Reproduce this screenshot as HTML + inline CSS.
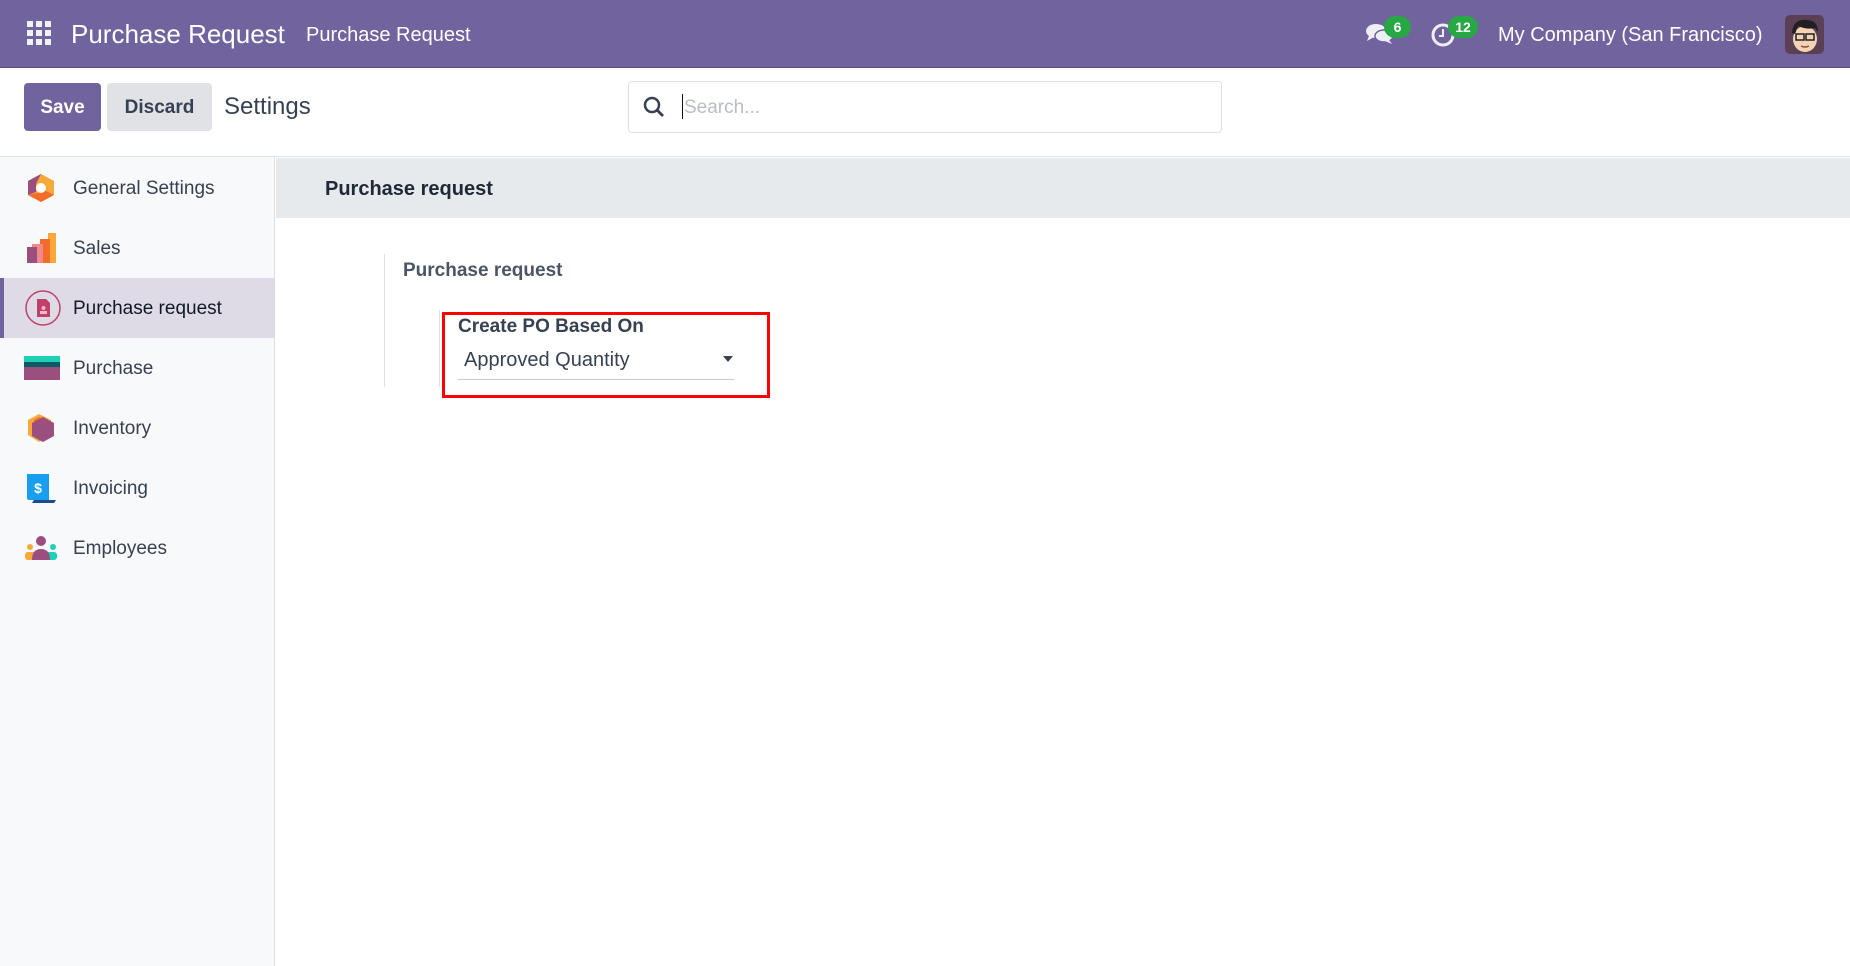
<!DOCTYPE html>
<html><head><meta charset="utf-8"><style>
*{box-sizing:border-box;margin:0;padding:0}
body{width:1850px;height:966px;overflow:hidden;background:#fff;font-family:"Liberation Sans","DejaVu Sans",sans-serif;color:#374151;position:relative}
.abs{position:absolute}
.nav{left:0;top:0;width:1850px;height:68px;background:#71639e;border-bottom:1px solid #5d5185}
.navt{color:#fff;white-space:nowrap}
.cp{left:0;top:68px;width:1850px;height:89px;background:#fff;border-bottom:1px solid #dee2e6}
.side{left:0;top:157px;width:275px;height:809px;background:#f8f9fa;border-right:1px solid #dee2e6}
.item{position:absolute;left:0;width:275px;height:60px;font-size:19px;color:#374151}
.item span{position:absolute;left:73px;top:20px}
.item .ic{position:absolute;left:24px;top:15px;width:34px;height:30px}
.badge{background:#28a745;color:#fff;font-size:14px;font-weight:bold;border-radius:12px;text-align:center;line-height:22px;height:22px}
</style></head><body>
<div class="abs nav"></div>
<svg class="abs" style="left:27px;top:21px" width="24" height="24" viewBox="0 0 24 24" fill="#f1f1f5"><rect x="0" y="0" width="6" height="6"/><rect x="9" y="0" width="6" height="6"/><rect x="18" y="0" width="6" height="6"/><rect x="0" y="9" width="6" height="6"/><rect x="9" y="9" width="6" height="6"/><rect x="18" y="9" width="6" height="6"/><rect x="0" y="18" width="6" height="6"/><rect x="9" y="18" width="6" height="6"/><rect x="18" y="18" width="6" height="6"/></svg>
<div class="abs navt" style="left:71px;top:19px;font-size:26px">Purchase Request</div>
<div class="abs navt" style="left:306px;top:24px;font-size:20px">Purchase Request</div>
<svg class="abs" style="left:1365px;top:22px" width="30" height="24" viewBox="0 0 30 24"><ellipse cx="11" cy="9" rx="10" ry="7" fill="#eeeef5"/><path d="M4 14 L2 19 L9 15Z" fill="#eeeef5"/><ellipse cx="19" cy="14" rx="9" ry="6" fill="#eeeef5" stroke="#71639e" stroke-width="1.5"/><path d="M24 18 L27 22 L20 19Z" fill="#eeeef5"/></svg>
<div class="abs badge" style="left:1384px;top:16px;width:27px">6</div>
<svg class="abs" style="left:1430px;top:22px" width="26" height="26" viewBox="0 0 26 26"><circle cx="13" cy="13" r="10" fill="none" stroke="#eeeef5" stroke-width="3"/><path d="M13 7v7h-4" stroke="#eeeef5" stroke-width="2" fill="none"/></svg>
<div class="abs badge" style="left:1448px;top:16px;width:30px">12</div>
<div class="abs navt" style="left:1498px;top:24px;font-size:20px">My Company (San Francisco)</div>
<div class="abs" style="left:1785px;top:15px;width:39px;height:39px;border-radius:5px;background:#5a3f55;overflow:hidden">
<svg width="39" height="39" viewBox="0 0 39 39"><ellipse cx="20" cy="24" rx="12" ry="13" fill="#f4d3b5"/><path d="M7 18 Q8 4 21 5 Q33 5 33 17 L30 13 Q22 15 13 11 L10 19Z" fill="#1f1f24"/><rect x="11" y="19" width="8" height="6" fill="none" stroke="#222" stroke-width="1.5"/><rect x="21" y="19" width="8" height="6" fill="none" stroke="#222" stroke-width="1.5"/><path d="M16 31 Q20 33 24 31" stroke="#8a5040" stroke-width="1.5" fill="none"/></svg></div>

<div class="abs cp"></div>
<div class="abs" style="left:24px;top:83px;width:77px;height:48px;background:#71639e;border-radius:4px;color:#fff;font-weight:bold;font-size:19px;text-align:center;line-height:50px">Save</div>
<div class="abs" style="left:107px;top:83px;width:105px;height:48px;background:#e0e2e6;border-radius:4px;color:#374151;font-weight:bold;font-size:19px;text-align:center;line-height:50px">Discard</div>
<div class="abs" style="left:224px;top:93px;font-size:24px;color:#374151">Settings</div>
<div class="abs" style="left:628px;top:81px;width:594px;height:52px;border:1px solid #dee2e6;border-radius:4px"></div>
<svg class="abs" style="left:642px;top:95px" width="24" height="24" viewBox="0 0 24 24"><circle cx="10" cy="10" r="7" fill="none" stroke="#374151" stroke-width="2.5"/><path d="M15 15 L21 21" stroke="#374151" stroke-width="2.8"/></svg>
<div class="abs" style="left:682px;top:94px;width:1px;height:25px;background:#111"></div>
<div class="abs" style="left:684px;top:97px;font-size:19px;color:#b8bec6">Search...</div>

<div class="abs side">
<div class="item" style="top:1px"><svg class="ic" viewBox="0 0 34 30"><path d="M17 1 L30 8 L30 22 L17 29 L4 22 L4 8Z" fill="#f9a83a"/><path d="M17 1 L4 8 L4 22 L12 19 L12 11Z" fill="#9b4f7f"/><path d="M4 22 L17 29 L30 22 L22 18Z" fill="#f56b2a"/><circle cx="17" cy="15" r="5" fill="#fff"/></svg><span>General Settings</span></div>
<div class="item" style="top:61px"><svg class="ic" viewBox="0 0 34 30"><rect x="24" y="0" width="8" height="30" fill="#f9a83a"/><rect x="16" y="6" width="10" height="24" fill="#f56b2a"/><rect x="8" y="11" width="11" height="19" fill="#f08a8a"/><rect x="3" y="14" width="10" height="16" fill="#9b4f7f"/></svg><span>Sales</span></div>
<div class="item" style="top:121px;background:#dedbe7;border-left:4px solid #71639e"><svg class="ic" style="left:20px;top:11px;width:38px;height:38px" viewBox="0 0 38 38"><circle cx="19" cy="19" r="17" fill="none" stroke="#c0406a" stroke-width="1.5"/><path d="M13 10 L22 10 L26 14 L26 28 L13 28Z" fill="#c0406a"/><circle cx="19.5" cy="19" r="2" fill="#f3b6c8"/><rect x="16" y="22" width="7" height="3" fill="#f3b6c8"/></svg><span style="left:69px;color:#111827">Purchase request</span></div>
<div class="item" style="top:181px"><svg class="ic" style="left:24px;width:36px" viewBox="0 0 36 30"><rect x="0" y="3" width="36" height="6" fill="#1ed1b4"/><rect x="0" y="9" width="36" height="5" fill="#0f5866"/><rect x="0" y="14" width="36" height="13" fill="#9b4f7f"/></svg><span>Purchase</span></div>
<div class="item" style="top:241px"><svg class="ic" viewBox="0 0 34 30"><path d="M15 1 L27 7 L27 22 L15 29 L4 22 L4 7Z" fill="#f9a83a"/><path d="M10 7 L15 4 L20 7 L10 13Z" fill="#f56b2a"/><path d="M19 4 L30 10 L30 23 L19 29 L8 23 L8 10Z" fill="#9b4f7f"/></svg><span>Inventory</span></div>
<div class="item" style="top:301px"><svg class="ic" viewBox="0 0 34 30"><path d="M3 1 L25 1 L25 27 L5 27 Q3 27 3 25Z" fill="#1a9ff0"/><path d="M10 27 L32 27 L30 30 L8 30Z" fill="#1b4b8f"/><text x="14" y="20" font-size="14" font-weight="bold" fill="#fff" text-anchor="middle" font-family="Liberation Sans">$</text></svg><span>Invoicing</span></div>
<div class="item" style="top:361px"><svg class="ic" viewBox="0 0 34 30"><circle cx="17" cy="8" r="5" fill="#9b4f7f"/><circle cx="6" cy="14" r="3" fill="#f9a83a"/><circle cx="29" cy="14" r="3" fill="#1ed1b4"/><rect x="1" y="19" width="12" height="8" rx="3" fill="#f9a83a"/><rect x="22" y="19" width="11" height="8" rx="3" fill="#1ed1b4"/><path d="M8 27 Q8 16 17 16 Q26 16 26 27Z" fill="#9b4f7f"/></svg><span>Employees</span></div>
</div>

<div class="abs" style="left:276px;top:158px;width:1574px;height:60px;background:#e7eaed"></div>
<div class="abs" style="left:325px;top:178px;font-size:20px;font-weight:bold;color:#1f2937">Purchase request</div>
<div class="abs" style="left:384px;top:254px;width:1px;height:133px;background:#dee2e6"></div>
<div class="abs" style="left:403px;top:260px;font-size:19px;font-weight:bold;color:#4b5563">Purchase request</div>
<div class="abs" style="left:439px;top:310px;width:1px;height:77px;background:#dee2e6"></div>
<div class="abs" style="left:458px;top:316px;font-size:19px;font-weight:bold;color:#374151">Create PO Based On</div>
<div class="abs" style="left:464px;top:349px;font-size:20px;color:#374151">Approved Quantity</div>
<div class="abs" style="left:723px;top:356px;width:0;height:0;border-left:5px solid transparent;border-right:5px solid transparent;border-top:6px solid #374151"></div>
<div class="abs" style="left:458px;top:379px;width:276px;height:1px;background:#c9cdd3"></div>
<div class="abs" style="left:442px;top:312px;width:328px;height:86px;border:3px solid #f00"></div>
</body></html>
